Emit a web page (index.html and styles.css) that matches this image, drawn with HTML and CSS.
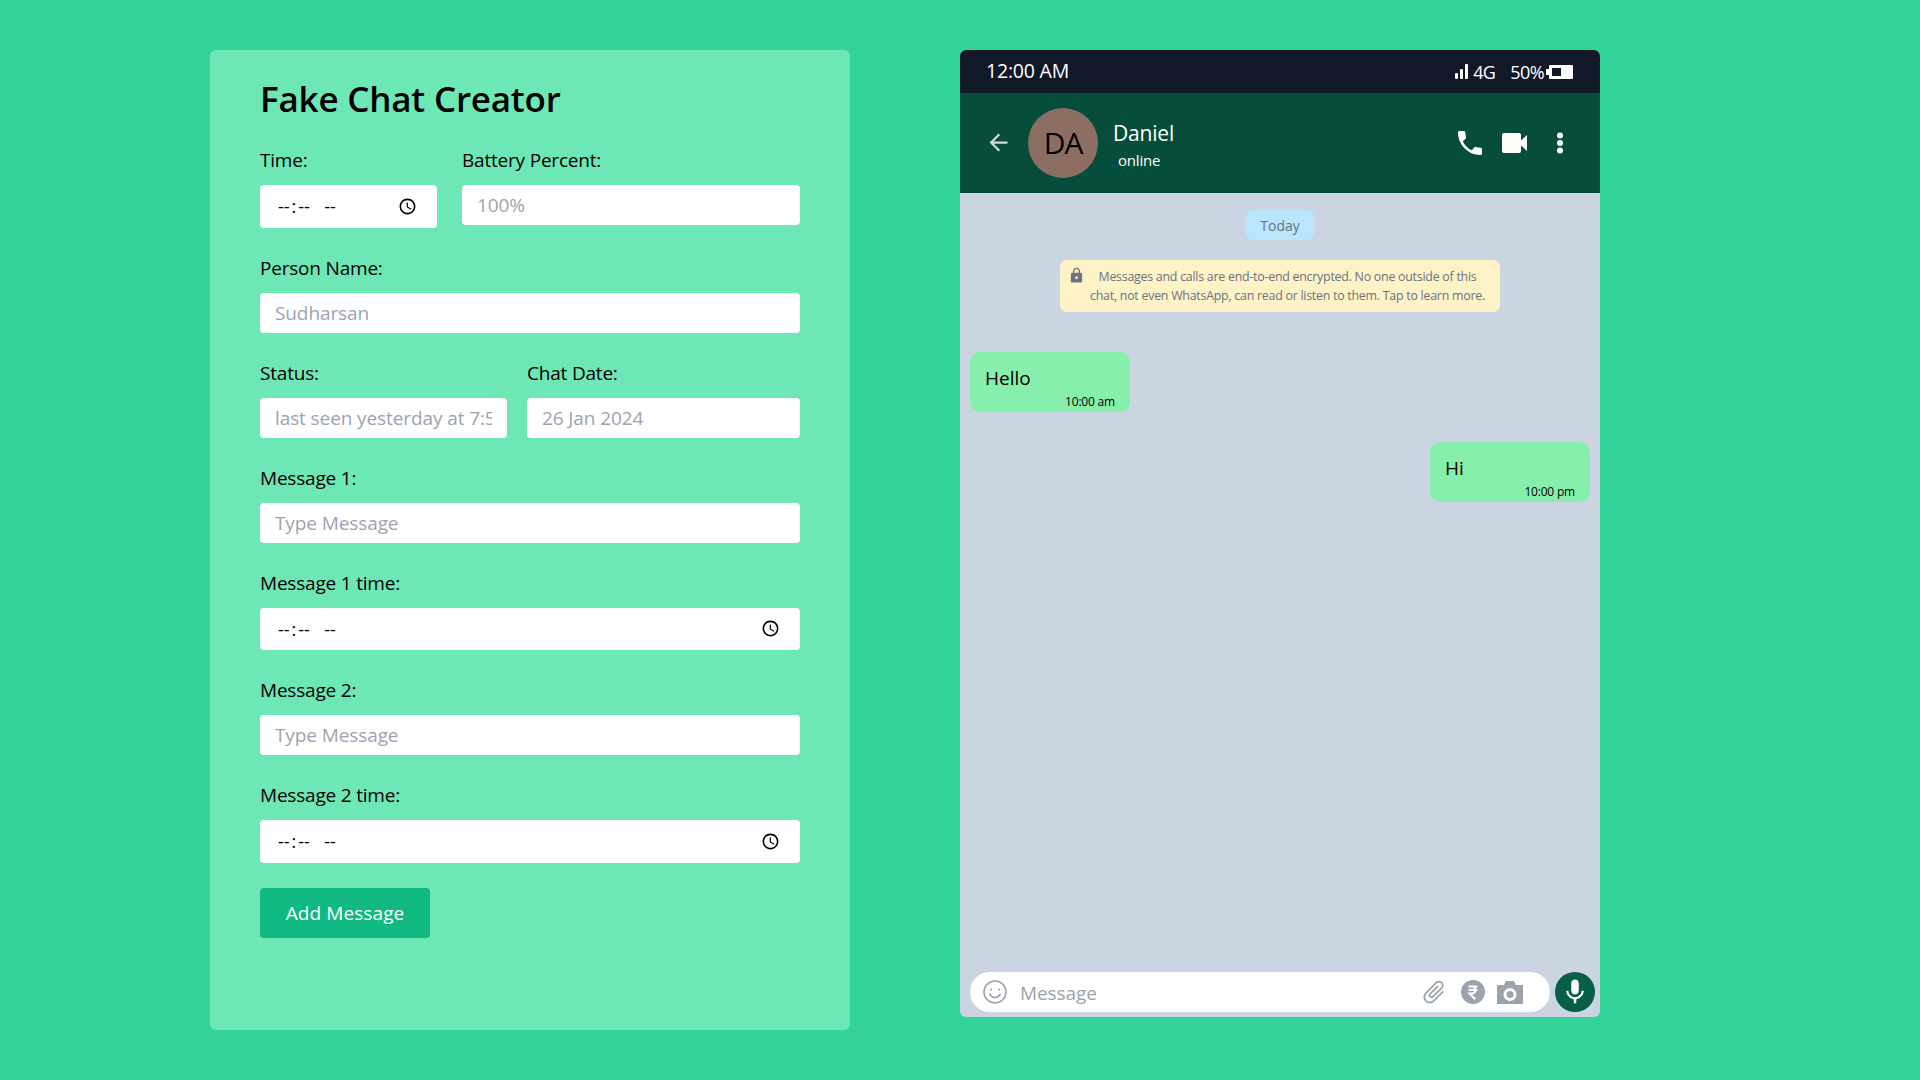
FILE: index.html
```html
<!DOCTYPE html>
<html lang="en">
<head>
    <meta charset="UTF-8">
    <title>Fake Chat Creator</title>
    <link rel="stylesheet" href="styles.css">
</head>
<body>
    <!-- Form on the left -->
    <div class="creator">
        <h1>Fake Chat Creator</h1>

        <div class="row row-time">
            <div class="field field-time">
                <label>Time:</label>
                <input type="time">
            </div>
            <div class="field field-grow">
                <label>Battery Percent:</label>
                <input type="text" placeholder="100%">
            </div>
        </div>

        <div class="field">
            <label>Person Name:</label>
            <input type="text" placeholder="Sudharsan">
        </div>

        <div class="row row-status">
            <div class="field field-status">
                <label>Status:</label>
                <input type="text" placeholder="last seen yesterday at 7:50 pm">
            </div>
            <div class="field field-grow">
                <label>Chat Date:</label>
                <input type="text" placeholder="26 Jan 2024">
            </div>
        </div>

        <div class="field">
            <label>Message 1:</label>
            <input type="text" placeholder="Type Message">
        </div>
        <div class="field">
            <label>Message 1 time:</label>
            <input type="time">
        </div>
        <div class="field">
            <label>Message 2:</label>
            <input type="text" placeholder="Type Message">
        </div>
        <div class="field">
            <label>Message 2 time:</label>
            <input type="time">
        </div>

        <button class="add-btn">Add Message</button>
    </div>

    <!-- Phone preview on the right -->
    <div class="phone">
        <div class="status-bar">
            <span class="clock">12:00 AM</span>
            <div class="status-right">
                <svg class="signal" width="13" height="15" viewBox="0 0 13 15">
                    <rect x="0" y="9" width="3" height="6" rx="1.2"/>
                    <rect x="5" y="5" width="3" height="10" rx="1"/>
                    <rect x="10" y="0" width="3" height="15" rx="1"/>
                </svg>
                <span class="net">4G</span>
                <span class="percent">50%</span>
                <svg class="battery" width="28" height="14" viewBox="0 0 28 14">
                    <path fill-rule="evenodd" d="M5 0h22a1 1 0 0 1 1 1v12a1 1 0 0 1-1 1H5a1 1 0 0 1-1-1V1a1 1 0 0 1 1-1zM7 3v8h9V3z"/>
                    <rect x="1" y="4" width="3" height="6"/>
                </svg>
            </div>
        </div>

        <div class="chat-header">
            <svg class="back" width="27" height="27" viewBox="0 0 24 24"><path d="M20 11H7.83l5.59-5.59L12 4l-8 8 8 8 1.41-1.41L7.83 13H20v-2z"/></svg>
            <div class="avatar">DA</div>
            <div class="who">
                <div class="who-name">Daniel</div>
                <div class="who-status">online</div>
            </div>
            <div class="header-icons">
                <svg width="32" height="32" viewBox="0 0 24 24"><path d="M6.62 10.79c1.44 2.83 3.76 5.14 6.59 6.59l2.2-2.2c.27-.27.67-.36 1.02-.24 1.12.37 2.33.57 3.57.57.55 0 1 .45 1 1V20c0 .55-.45 1-1 1-9.39 0-17-7.61-17-17 0-.55.45-1 1-1h3.5c.55 0 1 .45 1 1 0 1.25.2 2.45.57 3.57.11.35.03.74-.25 1.02l-2.2 2.2z"/></svg>
                <svg class="video" width="25" height="20" viewBox="0 0 25 20"><path d="M2 0h15a2 2 0 0 1 2 2v5.500l6-5.500v16l-6-5.500V18a2 2 0 0 1-2 2H2a2 2 0 0 1-2-2V2a2 2 0 0 1 2-2z"/></svg>
                <svg class="dots" width="8" height="22" viewBox="0 0 8 22">
                    <circle cx="4" cy="3.5" r="3"/>
                    <circle cx="4" cy="11" r="3"/>
                    <circle cx="4" cy="18.5" r="3"/>
                </svg>
            </div>
        </div>

        <div class="chat">
            <div class="today">Today</div>
            <div class="notice">
                <svg class="lock" width="17" height="17" viewBox="0 0 24 24"><path d="M18 8h-1V6c0-2.76-2.24-5-5-5S7 3.24 7 6v2H6c-1.1 0-2 .9-2 2v10c0 1.1.9 2 2 2h12c1.1 0 2-.9 2-2V10c0-1.1-.9-2-2-2zm-6 9c-1.1 0-2-.9-2-2s.9-2 2-2 2 .9 2 2-.9 2-2 2zm3.1-9H8.9V6c0-1.71 1.39-3.1 3.1-3.1 1.71 0 3.1 1.39 3.1 3.1v2z"/></svg>
                <p>Messages and calls are end-to-end encrypted. No one outside of this chat, not even WhatsApp, can read or listen to them. Tap to learn more.</p>
            </div>

            <div class="bubble">
                <div class="bubble-text">Hello</div>
                <div class="bubble-time">10:00 am</div>
            </div>
            <div class="bubble bubble-out">
                <div class="bubble-text">Hi</div>
                <div class="bubble-time">10:00 pm</div>
            </div>

            <div class="composer">
                <div class="composer-box">
                    <svg class="smile" width="24" height="24" viewBox="0 0 24 24" fill="none" stroke="#9ca3af" stroke-width="1.6" stroke-linecap="round">
                        <circle cx="12" cy="12" r="11"/>
                        <circle cx="8" cy="9.5" r="1.1" fill="#9ca3af" stroke="none"/>
                        <circle cx="16" cy="9.5" r="1.1" fill="#9ca3af" stroke="none"/>
                        <path d="M6.8 14.2c1.2 2.4 3 3.4 5.2 3.4s4-1 5.2-3.4"/>
                    </svg>
                    <input type="text" placeholder="Message">
                    <svg class="clip" width="28" height="28" viewBox="0 0 24 24"><path d="M16.5 6v11.5c0 2.21-1.79 4-4 4s-4-1.79-4-4V5c0-1.38 1.12-2.5 2.5-2.5s2.5 1.12 2.5 2.5v10.5c0 .55-.45 1-1 1s-1-.45-1-1V6H10v9.5c0 1.38 1.12 2.5 2.5 2.5s2.5-1.12 2.5-2.5V5c0-2.21-1.79-4-4-4S7 2.79 7 5v12.5c0 3.04 2.46 5.5 5.5 5.5s5.5-2.46 5.5-5.5V6h-1.5z"/></svg>
                    <svg class="rupee" width="24" height="24" viewBox="0 0 24 24">
                        <circle cx="12" cy="12" r="12" fill="#9ca3af"/>
                        <path d="M7.500 6.500h9M7.500 10h9M9 6.500h1.500c2.400 0 3.800 1.400 3.800 3.400s-1.400 3.500-3.800 3.500H8.500l5.700 5.800" fill="none" stroke="#fff" stroke-width="2"/>
                    </svg>
                    <svg class="camera" width="26" height="23" viewBox="0 0 26 23">
                        <path fill-rule="evenodd" d="M0 4h7l2-4h8l2 4h7v19H0zM13 7a6.5 6.5 0 1 0 0 13 6.500 6.500 0 0 0 0-13z"/>
                        <circle cx="13" cy="13.500" r="3.500"/>
                    </svg>
                </div>
                <div class="mic">
                    <svg width="30" height="30" viewBox="0 0 24 24"><path d="M12 14c1.66 0 3-1.34 3-3V5c0-1.66-1.34-3-3-3S9 3.34 9 5v6c0 1.66 1.34 3 3 3zm5.3-3c0 3-2.54 5.1-5.3 5.1S6.7 14 6.700 11H5c0 3.41 2.72 6.23 6 6.72V21h2v-3.28c3.28-.48 6-3.3 6-6.72h-1.700z"/></svg>
                </div>
            </div>
        </div>
    </div>
</body>
</html>
```

FILE: styles.css
```css
/* General Page Styling */
body {
    margin: 0;
    height: 1080px;
    overflow: hidden;
    box-sizing: border-box;
    padding: 50px 0 0 210px;
    display: flex;
    align-items: flex-start;
    gap: 110px;
    background-color: #34d399;
    font-family: "Open Sans", "Noto Sans", sans-serif;
    color: #000;
}

/* Form Panel */
.creator {
    width: 640px;
    height: 980px;
    box-sizing: border-box;
    padding: 26px 50px 0;
    background-color: #6ee7b7;
    border-radius: 6px;
}

h1 {
    margin: 0 0 24px;
    font-size: 35px;
    line-height: 45px;
    font-weight: 600;
    letter-spacing: -0.2px;
}

.row {
    display: flex;
}

.row-time {
    gap: 25px;
}

.row-status {
    gap: 20px;
}

.field {
    margin-bottom: 25px;
}

.field-time {
    width: 177px;
}

.field-status {
    width: 247px;
}

.field-grow {
    flex: 1;
}

label {
    display: block;
    height: 30px;
    margin-bottom: 10px;
    font-size: 19px;
    line-height: 31px;
    letter-spacing: -0.2px;
}

.field input {
    display: block;
    width: 100%;
    height: 40px;
    box-sizing: border-box;
    padding: 0 15px;
    border: 0;
    border-radius: 4px;
    background-color: #fff;
    font-family: inherit;
    font-size: 19px;
    letter-spacing: -0.1px;
    color: #000;
}

.field input[type="time"] {
    height: 42.5px;
    padding: 0 17px 0 16px;
    font-size: 18px;
}

/* Native time field parts, spaced out to the width of the original */
input::-webkit-datetime-edit-hour-field,
input::-webkit-datetime-edit-minute-field,
input::-webkit-datetime-edit-ampm-field {
    padding: 0 2px;
    letter-spacing: 1.5px;
}

input::-webkit-datetime-edit-ampm-field {
    margin-left: 8px;
}

input::placeholder {
    color: #9ca3af;
    opacity: 1;
}

.add-btn {
    display: block;
    width: 170px;
    height: 50px;
    padding: 0;
    border: 0;
    border-radius: 4px;
    background-color: #10b981;
    color: #fff;
    font-family: inherit;
    font-size: 19px;
    font-weight: 500;
    letter-spacing: 0.1px;
}

/* Phone */
.phone {
    width: 640px;
    height: 967px;
    display: flex;
    flex-direction: column;
    border-radius: 6px;
    overflow: hidden;
    background-color: #cbd5e1;
}

.status-bar {
    height: 43px;
    flex-shrink: 0;
    display: flex;
    align-items: center;
    justify-content: space-between;
    padding: 0 27px 0 26px;
    background-color: #111827;
    color: #fff;
}

.clock {
    margin-top: -2px;
    font-size: 19.5px;
    letter-spacing: -0.2px;
}

.status-right {
    display: flex;
    align-items: center;
    font-size: 18px;
    letter-spacing: -0.6px;
}

.status-right svg {
    fill: #fff;
}

.net {
    margin-left: 5px;
}

.percent {
    margin-left: 15px;
}

.battery {
    margin-left: 1px;
}

.chat-header {
    height: 100px;
    flex-shrink: 0;
    display: flex;
    align-items: center;
    background-color: #064e3b;
    color: #fff;
}

.back {
    margin: -2px 0 0 25px;
    fill: #d1d5db;
}

.avatar {
    width: 70px;
    height: 70px;
    margin-left: 16px;
    padding-bottom: 2px;
    box-sizing: border-box;
    display: flex;
    align-items: center;
    justify-content: center;
    border-radius: 50%;
    background-color: #8d6e63;
    color: #000;
    font-size: 30px;
    letter-spacing: -1px;
}

.who {
    align-self: flex-start;
    margin: 25px 0 0 15px;
}

.who-name {
    font-size: 21px;
    line-height: 30px;
    letter-spacing: -0.2px;
}

.who-status {
    padding-left: 5px;
    font-size: 15px;
    line-height: 24px;
    letter-spacing: -0.2px;
}

.header-icons {
    margin-left: auto;
    margin-right: 36px;
    display: flex;
    align-items: center;
}

.header-icons svg {
    fill: #fff;
}

.video {
    margin-left: 16px;
}

.dots {
    margin-left: 29px;
}

/* Chat Area */
.chat {
    flex: 1;
    display: flex;
    flex-direction: column;
    padding: 17px 10px 5px;
}

.today {
    align-self: center;
    width: 68px;
    height: 30px;
    border-radius: 7px;
    background-color: #bae6fd;
    color: #6b7280;
    font-size: 14px;
    line-height: 31px;
    text-align: center;
}

.notice {
    align-self: center;
    width: 440px;
    height: 52px;
    box-sizing: border-box;
    margin-top: 20px;
    padding: 0 10px 0 8px;
    display: flex;
    border-radius: 7px;
    background-color: #fef3c7;
    color: #6b7280;
}

.lock {
    flex-shrink: 0;
    margin-top: 7px;
    fill: #6b7280;
}

.notice p {
    flex: 1;
    margin: 7px 0 0;
    font-size: 12.4px;
    line-height: 19px;
    letter-spacing: -0.25px;
    text-align: center;
}

.bubble {
    width: 160px;
    height: 60px;
    box-sizing: border-box;
    margin-top: 40px;
    padding: 12px 15px 0 15px;
    border-radius: 10px;
    background-color: #86efac;
}

.bubble-out {
    align-self: flex-end;
    margin-top: 30px;
}

.bubble-text {
    font-size: 19px;
    line-height: 28px;
}

.bubble-time {
    margin-top: 2px;
    font-size: 12px;
    line-height: 16px;
    letter-spacing: -0.2px;
    text-align: right;
}

.composer {
    margin-top: auto;
    margin-right: -5px;
    display: flex;
    gap: 5px;
}

.composer-box {
    flex: 1;
    height: 40px;
    display: flex;
    align-items: center;
    padding: 0 27px 0 13px;
    border-radius: 20px;
    background-color: #fff;
}

.composer-box input {
    flex: 1;
    min-width: 0;
    margin: 2px 0 0 13px;
    padding: 0;
    border: 0;
    outline: 0;
    font-family: inherit;
    font-size: 19px;
    letter-spacing: -0.1px;
}

.clip {
    fill: #9ca3af;
    transform: rotate(45deg);
}

.rupee {
    margin-left: 13px;
}

.camera {
    margin-left: 12px;
    fill: #9ca3af;
}

.mic {
    width: 40px;
    height: 40px;
    flex-shrink: 0;
    display: flex;
    align-items: center;
    justify-content: center;
    border-radius: 50%;
    background-color: #065f46;
}

.mic svg {
    fill: #fff;
}
```
